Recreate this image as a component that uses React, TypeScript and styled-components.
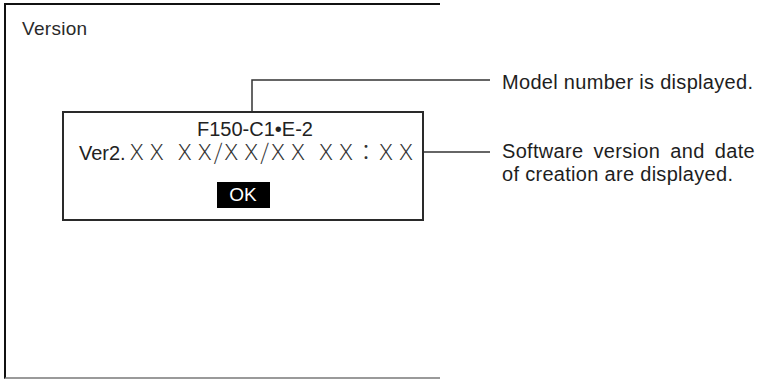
import styled, { createGlobalStyle } from "styled-components";

const GlobalStyle = createGlobalStyle`
  html, body {
    margin: 0;
    padding: 0;
    background: #ffffff;
  }
  body {
    font-family: "Liberation Sans", Arial, Helvetica, sans-serif;
    color: #222222;
  }
`;

function App() {
    return (
        <Page>
            <GlobalStyle />
            <Screen>
                <Title>Version</Title>
                <Dialog>
                    <ModelLine>F150-C1•E-2</ModelLine>
                    <VersionLine>
                        Ver2.<Wide>ＸＸ</Wide>
                        <Gap />
                        <Wide>ＸＸ/ＸＸ/ＸＸ</Wide>
                        <Gap />
                        <Wide>ＸＸ：ＸＸ</Wide>
                    </VersionLine>
                    <OkButton>OK</OkButton>
                </Dialog>
            </Screen>
            <Notes>
                <Note $top={71}>Model number is displayed.</Note>
                <Note $top={46}>
                    <Justified>Software version and date</Justified>
                    of creation are displayed.
                </Note>
            </Notes>
            <Callouts width="760" height="379" viewBox="0 0 760 379">
                <path d="M252 111 V80 H490" fill="none" stroke="#333" strokeWidth="1.5" />
                <path d="M424 152 H490" fill="none" stroke="#333" strokeWidth="1.5" />
            </Callouts>
        </Page>
    );
}

export default App;

const Page = styled.div`
  position: relative;
  display: flex;
  width: 760px;
  height: 379px;
  overflow: hidden;
`;

const Screen = styled.div`
  box-sizing: border-box;
  width: 436px;
  height: 376px;
  margin: 3px 0 0 4px;
  padding-top: 13px;
  border-left: 2px solid #111111;
  border-top: 2px solid #111111;
  border-bottom: 2px solid #9a9a9a;
  display: flex;
  flex-direction: column;
`;

const Title = styled.div`
  margin-left: 16px;
  font-size: 19px;
  line-height: 22px;
  letter-spacing: 0.3px;
  color: #2a2a2a;
`;

const Dialog = styled.div`
  box-sizing: border-box;
  width: 362px;
  height: 110px;
  margin: 71px 0 0 56px;
  padding-top: 6px;
  border: 2px solid #2a2a2a;
  display: flex;
  flex-direction: column;
  align-items: center;
`;

const ModelLine = styled.div`
  font-size: 20px;
  line-height: 20px;
  padding-left: 24px;
`;

const VersionLine = styled.div`
  display: flex;
  align-items: baseline;
  margin-top: 1px;
  font-size: 20px;
  line-height: 21px;
  white-space: nowrap;
  padding-left: 8px;
`;

const Wide = styled.span`
  font-family: "Noto Sans CJK JP", sans-serif;
  font-weight: 300;
  font-size: 22px;
  line-height: 21px;
  letter-spacing: -2px;
  color: #333333;
`;

const Gap = styled.span`
  display: inline-block;
  width: 8px;
`;

const OkButton = styled.div`
  margin-top: 18px;
  width: 53px;
  height: 26px;
  background: #000000;
  color: #ffffff;
  font-size: 19px;
  line-height: 26px;
  text-align: center;
`;

const Notes = styled.div`
  display: flex;
  flex-direction: column;
  padding-left: 62px;
`;

const Note = styled.div<{ $top: number }>`
  margin-top: ${(p) => p.$top}px;
  font-size: 20px;
  line-height: 23px;
  letter-spacing: 0.3px;
  color: #1e1e1e;
  white-space: nowrap;
`;

const Justified = styled.div`
  width: 253px;
  text-align: justify;
  text-align-last: justify;
`;

const Callouts = styled.svg`
  position: absolute;
  left: 0;
  top: 0;
  pointer-events: none;
`;
